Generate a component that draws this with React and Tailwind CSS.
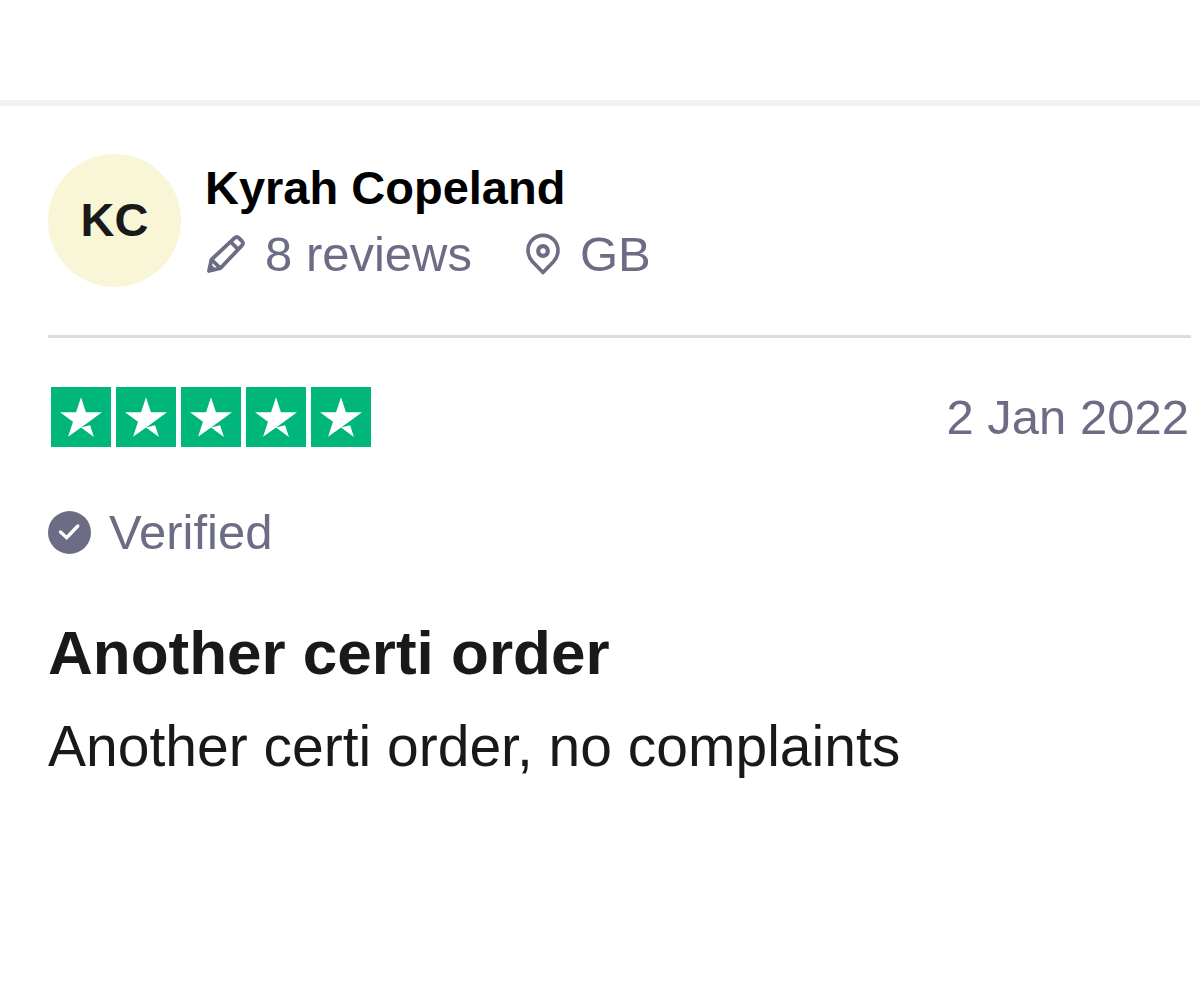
import React from 'react';

const review = {
    author: 'Kyrah Copeland',
    initials: 'KC',
    reviewCount: 8,
    country: 'GB',
    date: '2 Jan 2022',
    rating: 5,
    title: 'Another certi order',
    body: 'Another certi order, no complaints',
};

function PencilIcon() {
    return (
        <svg className="w-[38px] h-[38px] shrink-0" viewBox="0 0 38 38" fill="none" stroke="currentColor" strokeWidth="3.8" strokeLinejoin="round" aria-hidden="true">
            <path d="M2 36L4.4 24.6L27.4 3.2Q29.8 1 32 3.2L35 6.2Q37 8.4 34.8 10.6L13.4 33.2Z" />
            <path d="M4.4 24.6L13.4 33.2M23.8 7L31.2 14.4" />
            <path d="M2 36L3.4 30L8 34.4Z" fill="currentColor" strokeWidth="2" />
        </svg>
    );
}

function PinIcon() {
    return (
        <svg className="w-[34px] h-[42px] shrink-0" viewBox="0 0 34 42" fill="none" stroke="currentColor" strokeWidth="3.6" strokeLinejoin="round" aria-hidden="true">
            <path d="M17 39.6L6.6 28.8C3.4 25.2 2 21.4 2 17.4A15 15 0 0 1 32 17.4C32 21.4 30.6 25.2 27.4 28.8Z" />
            <circle cx="17" cy="18" r="4.8" strokeWidth="4.2" />
        </svg>
    );
}

function CheckIcon() {
    return (
        <svg className="w-[43px] h-[43px] shrink-0" viewBox="0 0 43 43" fill="none" aria-hidden="true">
            <circle cx="21.5" cy="21.5" r="21.5" fill="currentColor" />
            <path d="M12.5 21L18.7 26.7L29.8 15" stroke="#fff" strokeWidth="3.4" strokeLinecap="round" />
        </svg>
    );
}

function Stars({ rating }) {
    return (
        <svg className="w-[322px] h-[60px] shrink-0" viewBox="0 0 512 96" role="img" aria-label={`Rated ${rating} out of 5 stars`}>
            {Array.from({ length: rating }, (_, i) => (
                <g key={i} transform={`translate(${i * 104} 0)`}>
                    <path fill="#00b67a" d="M0 0h96v96H0z" />
                    <path fill="#fff" d="M48 64.7L62.6 61l6.1 18.8L48 64.7zm33.6-24.3H55.9L48 16.2l-7.9 24.2H14.4l20.8 15-7.9 24.2 20.8-15 12.8-9.2 20.7-15z" />
                </g>
            ))}
        </svg>
    );
}

export default function App() {
    return (
        <main className="min-h-screen bg-white pt-[100px] font-['Liberation_Sans',Arial,sans-serif] text-[#191919]">
            <article className="border-t-[6px] border-[#f1f1f3] pl-12 pr-[9px] pt-12">
                <header className="flex items-center gap-6 border-b-[3px] border-[#dcdce6] pb-12">
                    <div className="flex size-[133px] shrink-0 items-center justify-center rounded-full bg-[#f9f5d7] text-[47px] font-bold">
                        {review.initials}
                    </div>
                    <div className="leading-[66px]">
                        <div className="text-[47px] font-bold text-black">{review.author}</div>
                        <div className="flex items-center text-[49px] text-[#6c6c85]">
                            <span className="flex items-center gap-5 pl-[2px]">
                                <PencilIcon />
                                {review.reviewCount} reviews
                            </span>
                            <span className="ml-[54px] flex items-center gap-5">
                                <PinIcon />
                                {review.country}
                            </span>
                        </div>
                    </div>
                </header>

                <div className="flex flex-wrap items-center justify-between px-[2px] pt-[46px]">
                    <Stars rating={review.rating} />
                    <time dateTime="2022-01-02" className="text-[49px] leading-[66px] text-[#6c6c85]">{review.date}</time>
                </div>

                <div className="mt-[49px] flex items-center gap-[18px] text-[49px] leading-[66px] text-[#6c6c85]">
                    <CheckIcon />
                    Verified
                </div>

                <h1 className="mt-12 text-[62px] font-bold leading-[80px]">{review.title}</h1>
                <p className="mt-[11px] text-[57px] leading-[84px]">{review.body}</p>
            </article>
        </main>
    );
}
